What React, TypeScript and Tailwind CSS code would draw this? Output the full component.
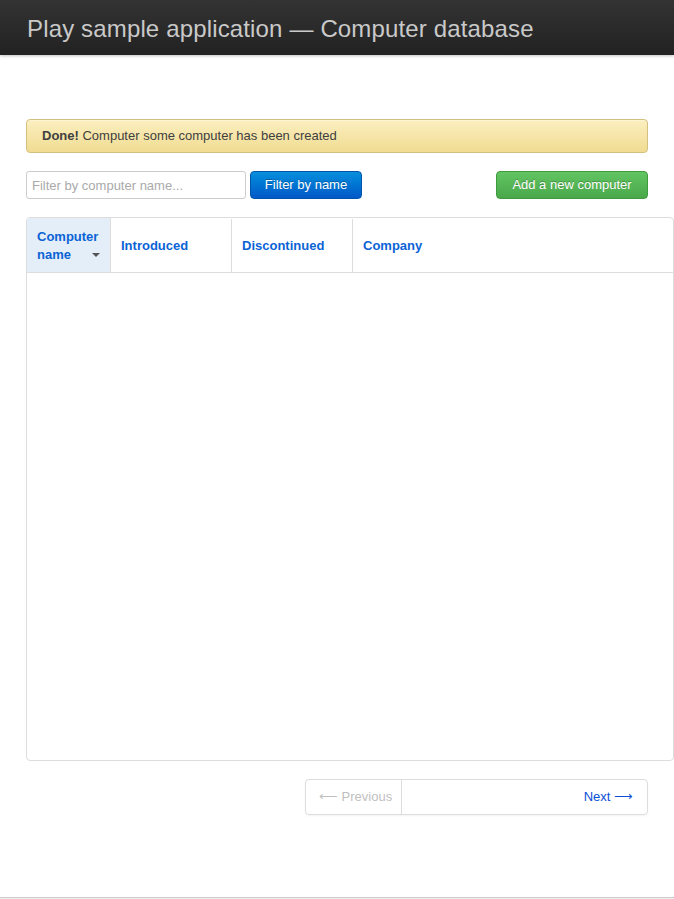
import React from "react";

const columns = [
  { label: "Introduced", width: "w-[121px]" },
  { label: "Discontinued", width: "w-[121px]" },
  { label: "Company", width: "" },
];

export default function App() {
  return (
    <div className="min-h-[899px] flex flex-col bg-white text-[13px] text-[#404040]" style={{ fontFamily: '"Liberation Sans", Arial, sans-serif' }}>
      <header className="h-[55px] flex items-center pt-[3px] px-[27px] bg-gradient-to-b from-[#333333] to-[#222222] shadow-[0_1px_3px_rgba(0,0,0,0.25)]">
        <h1 className="text-[24px] tracking-[0.15px] text-[#c9c9c9] font-normal leading-none">
          Play sample application — Computer database
        </h1>
      </header>

      <main className="flex-1 pl-[26px] pr-[26px] pt-[64px]">
        <div className="h-[34px] flex items-center px-[15px] rounded-[4px] border border-[#d4c07e] bg-gradient-to-b from-[#fcefc0] to-[#f0dc91] text-[#404040] shadow-[inset_0_1px_0_rgba(255,255,255,0.3)]">
          <span><strong className="font-bold">Done!</strong> Computer some computer has been created</span>
        </div>

        <div className="mt-[18px] flex items-center h-[28px]">
          <input
            placeholder="Filter by computer name..."
            className="w-[220px] h-[28px] px-[5px] border border-[#cccccc] rounded-[3px] text-[13px] text-[#404040] placeholder:text-[#aaaaaa] outline-none"
          />
          <button className="ml-[4px] w-[112px] h-[28px] rounded-[4px] border border-[#0055aa] bg-gradient-to-b from-[#0a8fdc] to-[#0458c8] text-white text-[13px] [text-shadow:0_-1px_0_rgba(0,0,0,0.25)]">
            Filter by name
          </button>
          <button className="ml-auto w-[152px] h-[28px] rounded-[4px] border border-[#3f9a3f] bg-gradient-to-b from-[#62c462] to-[#4aa84a] text-white text-[13px] [text-shadow:0_-1px_0_rgba(0,0,0,0.25)]">
            Add a new computer
          </button>
        </div>

        <div className="mt-[18px] mr-[-26px] h-[544px] border border-[#dddddd] rounded-[4px] overflow-hidden">
          <div className="flex h-[55px] pt-[1px] border-b border-[#dddddd] font-bold text-[#0b63d6]">
            <div className="w-[84px] -mt-[1px] bg-[#e3eef8] border-r border-[#dddddd] pl-[10px] pr-[8px] pt-[1px] flex flex-col justify-center leading-[18px]">
              <span>Computer</span>
              <span className="flex items-center justify-between">
                name
                <span className="w-0 h-0 border-l-[4px] border-r-[4px] border-t-[4px] border-l-transparent border-r-transparent border-t-[#555555] mr-[2px]" />
              </span>
            </div>
            {columns.map((c, i) => (
              <div
                key={c.label}
                className={`${c.width || "flex-1"} flex items-center px-[10px] ${i < columns.length - 1 ? "border-r border-[#dddddd]" : ""}`}
              >
                {c.label}
              </div>
            ))}
          </div>
        </div>

        <div className="mt-[18px] flex justify-end">
          <div className="w-[343px] h-[36px] flex border border-[#dddddd] rounded-[4px] shadow-[0_1px_2px_rgba(0,0,0,0.05)]">
            <span className="w-[96px] flex items-center pl-[13px] border-r border-[#dddddd] text-[#bfbfbf]">⟵ Previous</span>
            <span className="flex-1 flex items-center justify-end pr-[14px] text-[#0b4fd6]">Next ⟶</span>
          </div>
        </div>
      </main>

      <footer className="h-[2px] border-t border-[#cccccc] bg-[#eeeeee]" />
    </div>
  );
}
